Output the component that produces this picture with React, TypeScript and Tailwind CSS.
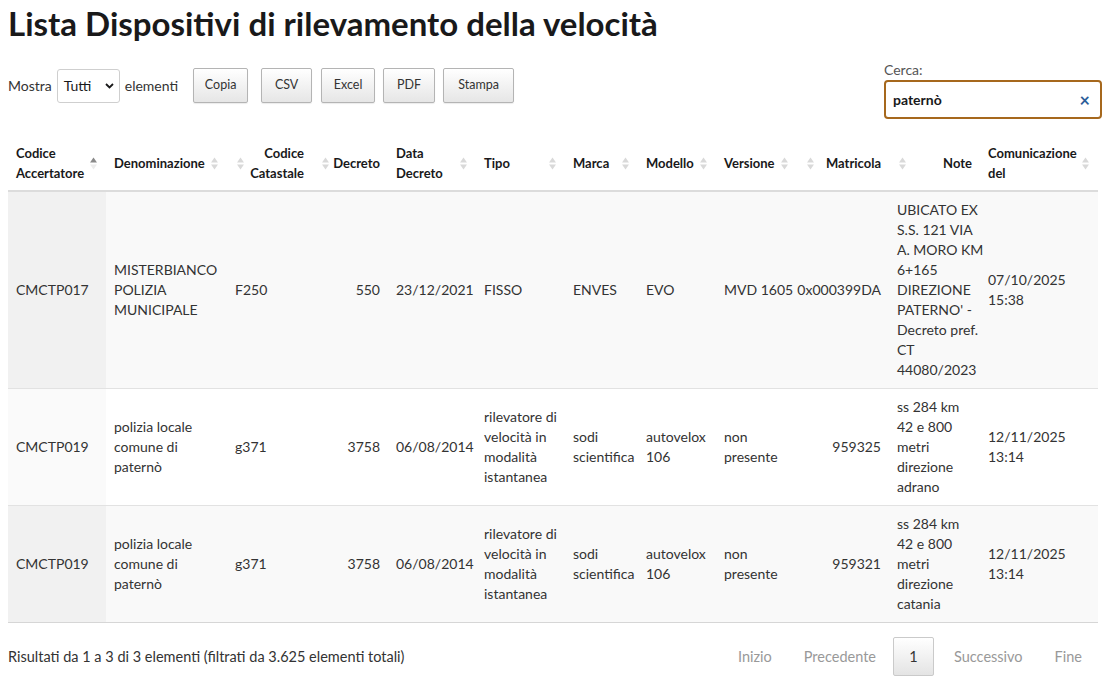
import React from 'react';

type Col = {
  label: string;
  width: string;
  right?: boolean; // header text aligned right (sort icon on the left)
  bodyRight?: boolean;
  nowrap?: boolean;
  sorted?: boolean;
};

const columns: Col[] = [
  { label: 'Codice Accertatore', width: 'w-[98px]', sorted: true },
  { label: 'Denominazione', width: 'w-[121px]' },
  { label: 'Codice Catastale', width: 'w-[85px]', right: true },
  { label: 'Decreto', width: 'w-[76px]', right: true, bodyRight: true },
  { label: 'Data Decreto', width: 'w-[88px]' },
  { label: 'Tipo', width: 'w-[89px]' },
  { label: 'Marca', width: 'w-[73px]' },
  { label: 'Modello', width: 'w-[78px]' },
  { label: 'Versione', width: 'w-[81px]' },
  { label: 'Matricola', width: 'w-[92px]', right: true, bodyRight: true, nowrap: true },
  { label: 'Note', width: 'w-[91px]', right: true },
  { label: 'Comunicazione del', width: 'w-[118px]' },
];

type Cell = string | string[];

const rows: Cell[][] = [
  [
    'CMCTP017',
    'MISTERBIANCO POLIZIA MUNICIPALE',
    'F250',
    '550',
    '23/12/2021',
    'FISSO',
    'ENVES',
    'EVO',
    'MVD\u00a01605',
    '0x000399DA',
    ['UBICATO EX', 'S.S. 121 VIA', 'A. MORO KM', '6+165', 'DIREZIONE', "PATERNO' -", 'Decreto pref.', 'CT', '44080/2023'],
    '07/10/2025 15:38',
  ],
  [
    'CMCTP019',
    'polizia locale comune di paternò',
    'g371',
    '3758',
    '06/08/2014',
    'rilevatore di velocità in modalità istantanea',
    'sodi scientifica',
    'autovelox 106',
    'non presente',
    '959325',
    ['ss 284 km', '42 e 800', 'metri', 'direzione', 'adrano'],
    '12/11/2025 13:14',
  ],
  [
    'CMCTP019',
    'polizia locale comune di paternò',
    'g371',
    '3758',
    '06/08/2014',
    'rilevatore di velocità in modalità istantanea',
    'sodi scientifica',
    'autovelox 106',
    'non presente',
    '959321',
    ['ss 284 km', '42 e 800', 'metri', 'direzione', 'catania'],
    '12/11/2025 13:14',
  ],
];

const SortIcon = ({ active }: { active?: boolean }) => (
  <svg width="7" height="13" viewBox="0 0 7 13" className="shrink-0">
    <polygon points="0,5.5 3.5,0.5 7,5.5" fill={active ? '#8a8a8a' : '#d9d9d9'} />
    <polygon points="0,7.5 3.5,12.5 7,7.5" fill={active ? '#ececec' : '#d9d9d9'} />
  </svg>
);

const ToolButton = ({ children, className }: { children: React.ReactNode; className: string }) => (
  <button
    className={`h-[35px] rounded-[2px] border border-[#b4b4b4] bg-gradient-to-b from-white to-[#e6e6e6] text-[12.5px] text-[#333] shadow-[0_1px_1px_rgba(0,0,0,0.08)] ${className}`}
  >
    {children}
  </button>
);

const renderCell = (cell: Cell, col: Col) => {
  if (Array.isArray(cell)) {
    return cell.map((line, i) => (
      <div key={i} className="whitespace-nowrap">
        {line}
      </div>
    ));
  }
  if (col.nowrap) {
    return <div className="flex justify-end whitespace-nowrap">{cell}</div>;
  }
  return cell;
};

export default function App() {
  return (
    <div className="min-h-[680px] bg-white px-2 font-['Lato',sans-serif] text-[14px] text-[#333]">
      <h1 className="pt-[3px] text-[33px] font-bold leading-[40px] text-[#19191a]">
        Lista Dispositivi di rilevamento della velocità
      </h1>

      {/* toolbar */}
      <div className="mt-[17px] flex items-start justify-between">
        <div className="mt-[8px] flex items-center">
          <span>Mostra</span>
          <div className="ml-[5px] flex h-[34px] w-[63px] items-center justify-between rounded-[3px] border border-[#cfcfcf] bg-white pl-[6px] pr-[5px] text-[#19191a]">
            <span>Tutti</span>
            <svg width="9" height="6" viewBox="0 0 9 6">
              <path d="M1 1 L4.5 4.5 L8 1" fill="none" stroke="#19191a" strokeWidth="1.8" />
            </svg>
          </div>
          <span className="ml-[5px]">elementi</span>
          <div className="ml-[15px] flex">
            <ToolButton className="w-[55px]">Copia</ToolButton>
            <ToolButton className="ml-[13px] w-[51px]">CSV</ToolButton>
            <ToolButton className="ml-[9px] w-[54px]">Excel</ToolButton>
            <ToolButton className="ml-[8px] w-[52px]">PDF</ToolButton>
            <ToolButton className="ml-[8px] w-[71px]">Stampa</ToolButton>
          </div>
        </div>

        <div className="mr-[10px] flex w-[218px] flex-col">
          <label className="leading-[20px] text-[#555]">Cerca:</label>
          <div className="flex h-[39px] items-center justify-between rounded-[4px] border-2 border-[#a6681d] pl-[7px] pr-[10px]">
            <span className="font-bold text-[#19191a]">paternò</span>
            <span className="text-[18px] font-bold leading-none text-[#2d5e99]">×</span>
          </div>
        </div>
      </div>

      {/* table */}
      <table className="mt-[14px] w-[1090px] table-fixed border-collapse">
        <thead>
          <tr className="border-b-2 border-[#dcdcdc]">
            {columns.map((c, i) => (
              <th
                key={i}
                className={`${c.width} pb-[7px] pt-[10px] align-middle text-[13px] font-bold leading-[20px] text-[#19191a] ${
                  c.right ? 'pl-[10px] pr-2 text-right' : 'pl-2 pr-[9px] text-left'
                }`}
              >
                {c.right ? (
                  <div className="flex items-center justify-between gap-[3px]">
                    <SortIcon />
                    <span>{c.label}</span>
                  </div>
                ) : (
                  <div className="flex items-center justify-between gap-[3px]">
                    <span>{c.label}</span>
                    <SortIcon active={c.sorted} />
                  </div>
                )}
              </th>
            ))}
          </tr>
        </thead>
        <tbody>
          {rows.map((r, ri) => {
            const odd = ri % 2 === 0;
            return (
              <tr
                key={ri}
                className={`border-b ${odd ? 'bg-[#f9f9f9]' : 'bg-white'} ${
                  ri === rows.length - 1 ? 'border-[#d6d6d6]' : 'border-[#e2e2e2]'
                }`}
              >
                {r.map((cell, ci) => (
                  <td
                    key={ci}
                    className={`px-2 py-2 align-middle leading-[20px] ${
                      columns[ci].bodyRight ? 'text-right' : 'text-left'
                    } ${ci === 0 ? (odd ? 'bg-[#f1f1f1]' : 'bg-[#fafafa]') : ''}`}
                  >
                    {renderCell(cell, columns[ci])}
                  </td>
                ))}
              </tr>
            );
          })}
        </tbody>
      </table>

      {/* footer */}
      <div className="mt-[14px] flex w-[1090px] items-center justify-between">
        <span className="text-[14.5px]">Risultati da 1 a 3 di 3 elementi (filtrati da 3.625 elementi totali)</span>
        <div className="flex items-center text-[14.5px] text-[#999]">
          <span className="px-4">Inizio</span>
          <span className="pl-4 pr-[17px]">Precedente</span>
          <span className="flex h-[39px] w-[41px] items-center justify-center rounded-[2px] border border-[#cacaca] bg-gradient-to-b from-white to-[#e4e4e4] text-[#333]">
            1
          </span>
          <span className="pl-[20px] pr-4">Successivo</span>
          <span className="px-4">Fine</span>
        </div>
      </div>
    </div>
  );
}
